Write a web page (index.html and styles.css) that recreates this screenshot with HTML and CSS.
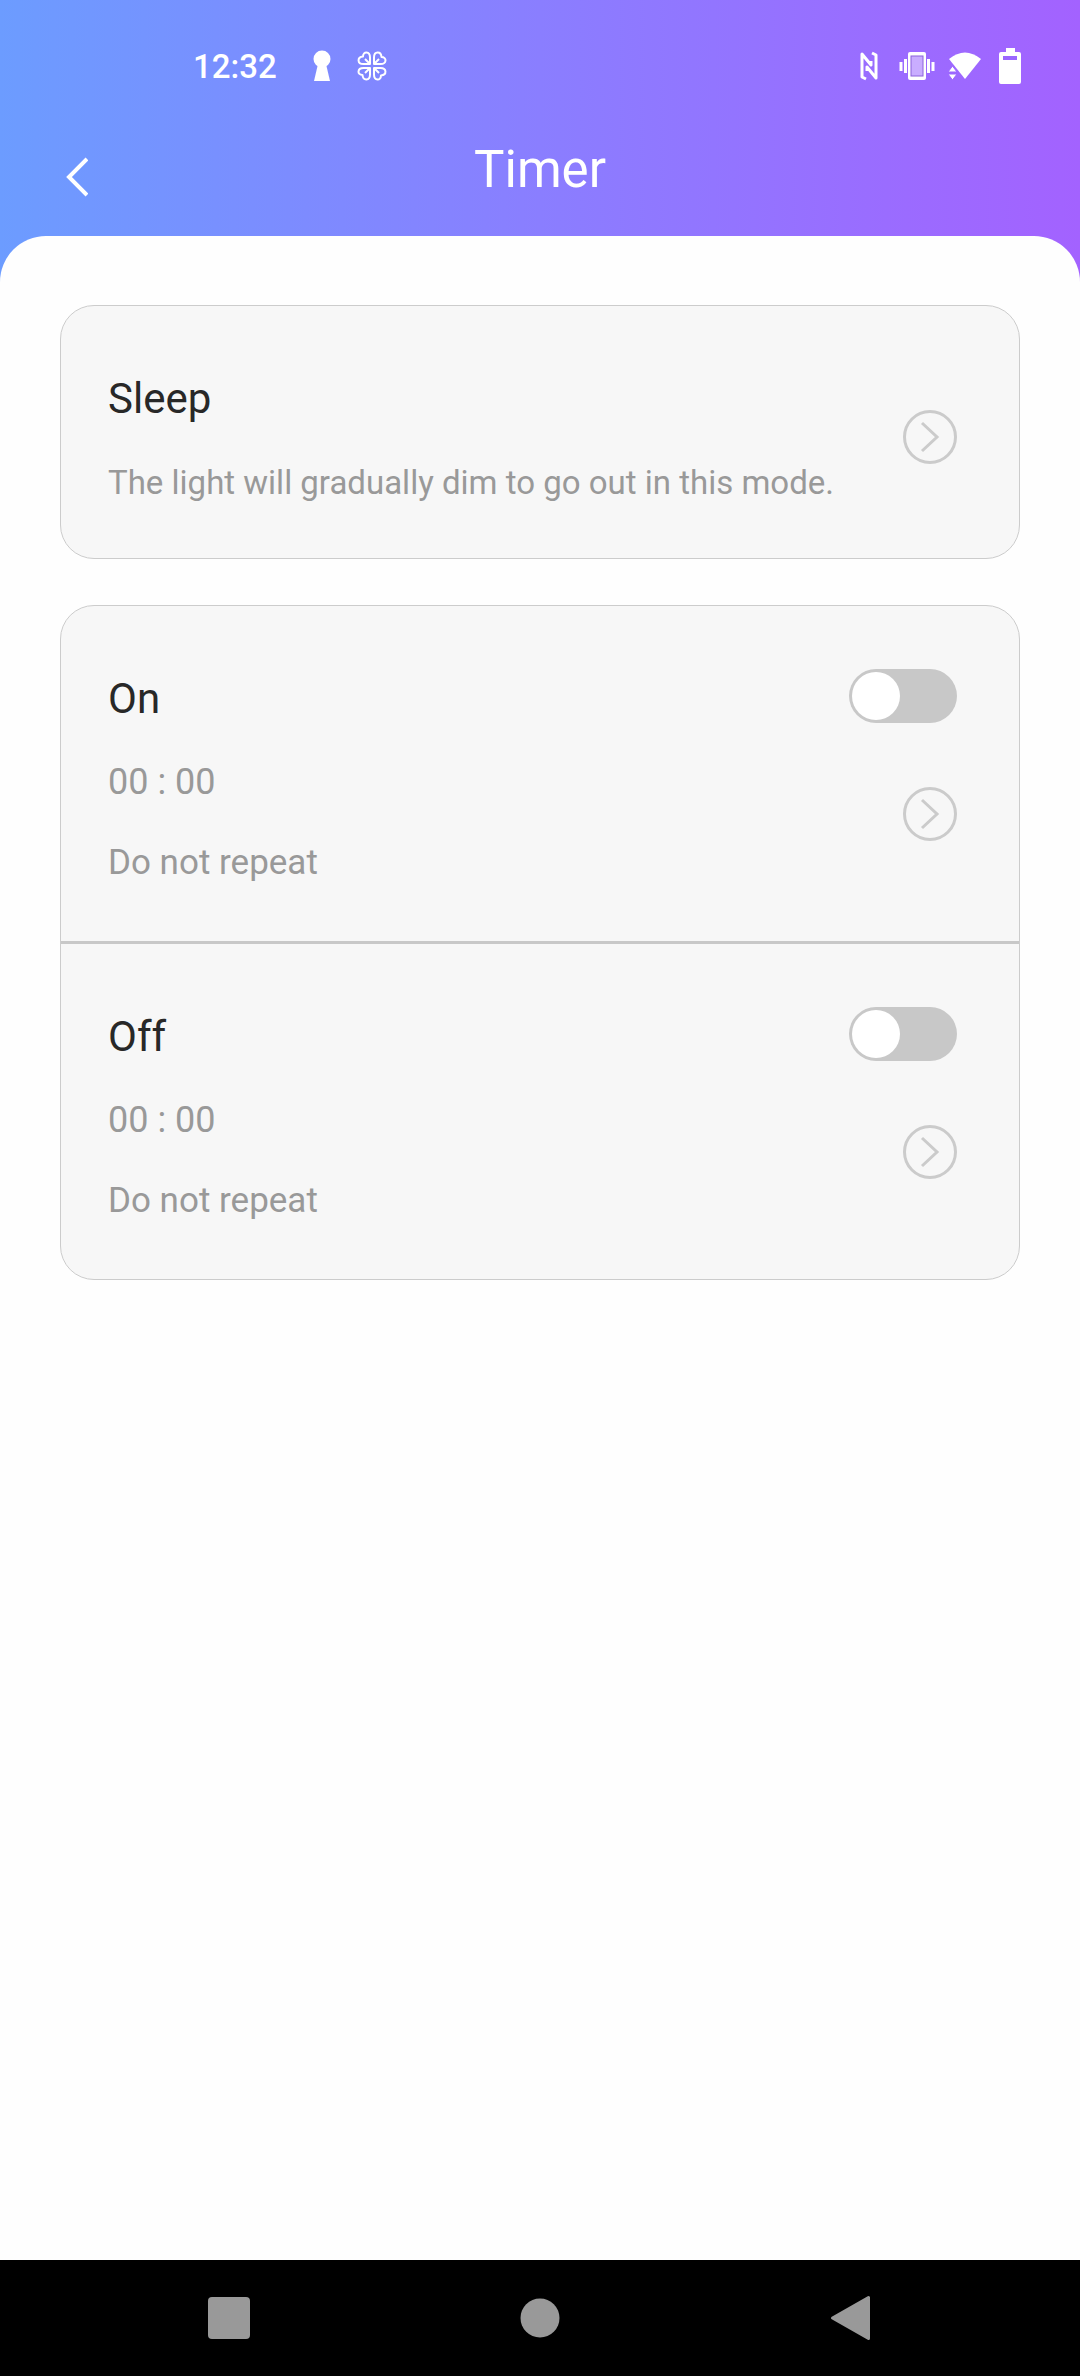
FILE: index.html
```
<!DOCTYPE html>
<html lang="en">
<head>
  <meta charset="UTF-8">
  <meta name="viewport" content="width=device-width, initial-scale=1">
  <title>Timer</title>
  <link rel="stylesheet" href="styles.css">
</head>
<body>
  <!-- Status bar -->
  <div class="status-bar">
    <div class="status-left">
      <span class="clock">12:32</span>
      <svg class="icon-keyhole" width="18" height="32" viewBox="0 0 18 32" fill="#fff">
        <circle cx="9" cy="9" r="8.500"/>
        <path d="M5 14h8l4 17H1z"/>
      </svg>
      <svg width="30" height="30" viewBox="0 0 30 30" fill="none" stroke="#fff" stroke-width="2" stroke-linejoin="round">
        <g id="leaf">
          <path d="M13 13V6.500C13 0 6 0 6 5.500C0 6 0 13 6.500 13z"/>
          <path d="M13 13L8 8"/>
        </g>
        <use href="#leaf" transform="rotate(90 15 15)"/>
        <use href="#leaf" transform="rotate(180 15 15)"/>
        <use href="#leaf" transform="rotate(270 15 15)"/>
      </svg>
    </div>
    <div class="status-right">
      <svg class="icon-nfc" width="20" height="30" viewBox="0 0 20 30" fill="none" stroke="#fff" stroke-width="3" stroke-linejoin="round">
        <path d="M7 28L3 26V3L12 14V10"/>
        <path d="M13 2L17 4V27L8 16V20"/>
      </svg>
      <svg class="icon-vibrate" width="36" height="30" viewBox="0 0 36 30">
        <path d="M2 11v9M6.500 8v14M29.500 8v14M34 11v9" stroke="#fff" stroke-width="3"/>
        <rect x="9" y="1" width="18" height="28" rx="2" fill="#fff"/>
        <rect x="12" y="5" width="12" height="20" fill="#c9adff" stroke="#8c63dc"/>
      </svg>
      <svg class="icon-wifi" width="34" height="30" viewBox="0 0 34 30" fill="#fff">
        <path d="M1 8Q17-5 33 8L17 28z"/>
        <path d="M0 21l4.500-6 4.500 6zM0 23h9l-4.500 6z" stroke="#9b67ff"/>
      </svg>
      <svg width="22" height="36" viewBox="0 0 22 36">
        <path d="M7 0h9v4h4q2 0 2 2v28q0 2-2 2H2q-2 0-2-2V6q0-2 2-2h5z" fill="#fff"/>
        <path d="M4 8h14v4H4z" fill="#9b67ff"/>
      </svg>
    </div>
  </div>

  <!-- Title bar -->
  <header class="title-bar">
    <button class="back" type="button" aria-label="Back">
      <svg width="24" height="40" viewBox="0 0 24 40" fill="none" stroke="#fff" stroke-width="4">
        <path d="M23 2L5 20L23 38"/>
      </svg>
    </button>
    <h1>Timer</h1>
  </header>

  <main>
    <section class="card">
      <div class="row compact">
        <div class="info">
          <h2>Sleep</h2>
          <p class="note">The light will gradually dim to go out in this mode.</p>
        </div>
        <div class="controls">
          <button class="more" type="button" aria-label="Sleep settings">
            <svg width="54" height="54" viewBox="0 0 54 54" fill="none" stroke="#cbcbcb" stroke-width="3">
              <circle cx="27" cy="27" r="25.500"/>
              <path d="M19 13L34 27L19 41"/>
            </svg>
          </button>
        </div>
      </div>
    </section>

    <section class="card">
      <div class="row">
        <div class="info">
          <h2><label for="timer-on">On</label></h2>
          <p class="time">00 : 00</p>
          <p>Do not repeat</p>
        </div>
        <div class="controls">
          <input class="switch" type="checkbox" id="timer-on">
          <button class="more" type="button" aria-label="On time settings">
            <svg width="54" height="54" viewBox="0 0 54 54" fill="none" stroke="#cbcbcb" stroke-width="3">
              <circle cx="27" cy="27" r="25.500"/>
              <path d="M19 13L34 27L19 41"/>
            </svg>
          </button>
        </div>
      </div>
      <div class="row">
        <div class="info">
          <h2><label for="timer-off">Off</label></h2>
          <p class="time">00 : 00</p>
          <p>Do not repeat</p>
        </div>
        <div class="controls">
          <input class="switch" type="checkbox" id="timer-off">
          <button class="more" type="button" aria-label="Off time settings">
            <svg width="54" height="54" viewBox="0 0 54 54" fill="none" stroke="#cbcbcb" stroke-width="3">
              <circle cx="27" cy="27" r="25.500"/>
              <path d="M19 13L34 27L19 41"/>
            </svg>
          </button>
        </div>
      </div>
    </section>
  </main>

  <!-- System navigation -->
  <nav>
    <button type="button" aria-label="Recent apps">
      <svg width="46" height="46" viewBox="0 0 46 46" fill="#999">
        <rect x="2" y="2" width="42" height="42" rx="4"/>
      </svg>
    </button>
    <button type="button" aria-label="Home">
      <svg width="46" height="46" viewBox="0 0 46 46" fill="#999">
        <circle cx="23" cy="23" r="19.500"/>
      </svg>
    </button>
    <button type="button" aria-label="Back">
      <svg width="46" height="46" viewBox="0 0 46 46" fill="#999" stroke="#999" stroke-width="3" stroke-linejoin="round">
        <path d="M40.500 2.500v41L4.500 23z"/>
      </svg>
    </button>
  </nav>
</body>
</html>
```

FILE: styles.css
```
* {
  margin: 0;
  padding: 0;
  box-sizing: border-box;
}
body {
  font-family: Roboto, sans-serif;
  background: linear-gradient(90deg, #6c9cff, #8a7eff 50%, #a362ff);
  color: #282828;
  display: flex;
  flex-direction: column;
  min-height: 100vh;
}
button {
  background: none;
  border: none;
  cursor: pointer;
}
svg {
  display: block;
}

/* Status bar */
.status-bar {
  display: flex;
  justify-content: space-between;
  align-items: center;
  height: 132px;
  padding: 0 59px 0 193px;
}
.status-left,
.status-right {
  display: flex;
  align-items: center;
}
.clock {
  padding-top: 2px;
  color: #fff;
  font-size: 33px;
  font-weight: 500;
  line-height: 40px;
}
.icon-keyhole {
  margin: 0 26px 0 36px;
}
.icon-nfc {
  margin-right: 20px;
}
.icon-vibrate {
  margin-right: 13px;
}
.icon-wifi {
  margin-right: 17px;
}

/* Title bar */
.title-bar {
  display: grid;
  grid-template-columns: 1fr auto 1fr;
  align-items: end;
  height: 104px;
  padding: 0 64px 36px;
}
.title-bar h1 {
  color: #fff;
  font-size: 51px;
  font-weight: 400;
  line-height: 60px;
}
.back {
  display: flex;
  align-items: center;
  width: 46px;
  height: 46px;
}

/* Content sheet */
main {
  flex: 1;
  display: flex;
  flex-direction: column;
  gap: 46px;
  padding: 69px 60px;
  background: #fefefe;
  border-radius: 46px 46px 0 0;
}
.card {
  background: #f7f7f7;
  border: 1px solid #ccc;
  border-radius: 34px;
}
.row {
  display: flex;
  justify-content: space-between;
  padding: 63px 62px 57px 47px;
}
.row + .row {
  border-top: 3px solid #c8c8c8;
}
.row.compact {
  padding-bottom: 54px;
}
.info {
  display: flex;
  flex-direction: column;
  gap: 37px;
  padding-top: 5px;
}
.info h2 {
  font-size: 42px;
  font-weight: 400;
  line-height: 50px;
}
.info p {
  color: #999;
  font-size: 35px;
  line-height: 43px;
}
.info .time {
  font-size: 36px;
}
.info .note {
  font-size: 33px;
}
.controls {
  display: flex;
  flex-direction: column;
  align-items: flex-end;
  gap: 64px;
}
.compact .controls {
  justify-content: center;
}
.more {
  border-radius: 50%;
}

/* Switch */
.switch {
  appearance: none;
  width: 108px;
  height: 54px;
  padding: 3px;
  background: #c8c8c8;
  border-radius: 27px;
  cursor: pointer;
}
.switch::before {
  content: "";
  display: block;
  width: 48px;
  height: 48px;
  background: #fff;
  border-radius: 50%;
}
.switch:checked {
  background: #8a7eff;
}
.switch:checked::before {
  margin-left: auto;
}

/* System navigation */
nav {
  display: flex;
  justify-content: space-between;
  align-items: center;
  height: 116px;
  padding: 0 206px;
  background: #000;
}
```
